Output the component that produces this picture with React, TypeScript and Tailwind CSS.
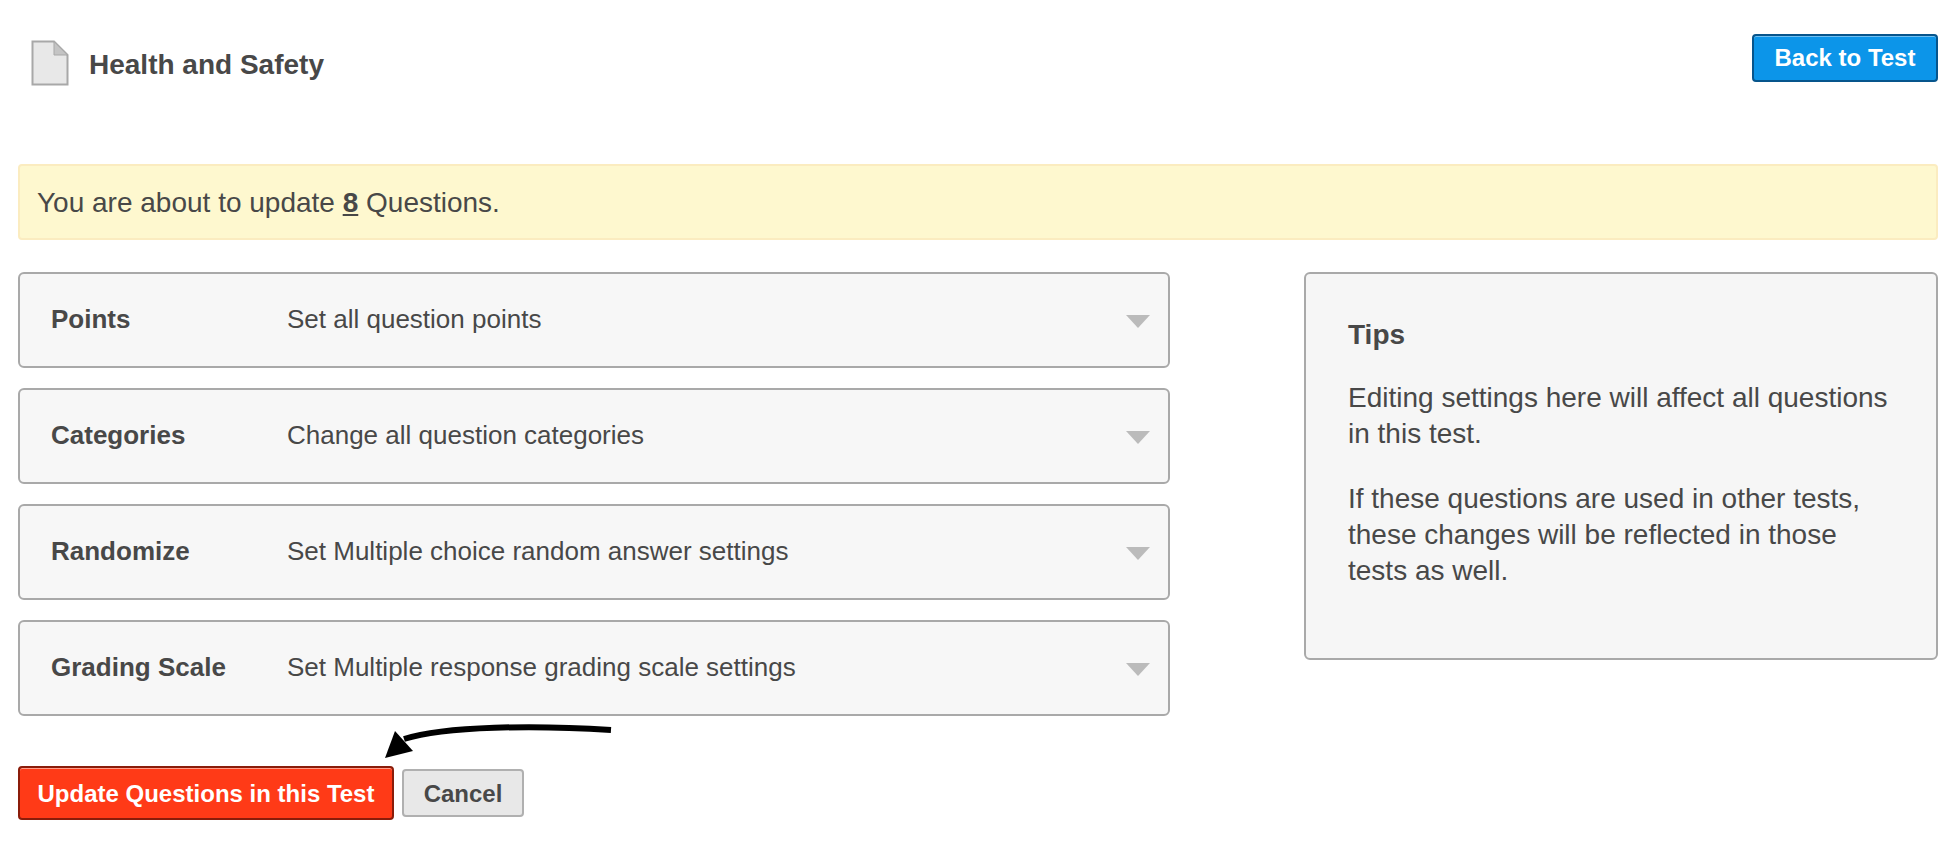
const rows = [
  { label: "Points", text: "Set all question points" },
  { label: "Categories", text: "Change all question categories" },
  { label: "Randomize", text: "Set Multiple choice random answer settings" },
  { label: "Grading Scale", text: "Set Multiple response grading scale settings" },
];

const DocIcon = () => (
  <svg width="38" height="46" viewBox="0 0 38 46" className="shrink-0">
    <path d="M1.5 1.5H23L36.5 15V44.5H1.5Z" fill="#e8e8e8" stroke="#a8a8a8" strokeWidth="2" />
    <path d="M23 1.5V15H36.5Z" fill="#c4c4c4" stroke="#a8a8a8" strokeWidth="1" />
  </svg>
);

const App = () => {
  return (
    <div className="h-[858px] w-[1950px] overflow-hidden bg-white pl-[18px] pr-[12px] font-['Liberation_Sans',Arial,sans-serif] text-[#484848]">
      <div className="flex h-[164px] items-start justify-between">
        <div className="ml-[13px] mt-[40px] flex items-center gap-[20px]">
          <DocIcon />
          <h1 className="mt-[4px] text-[28px] font-bold leading-[30px]">Health and Safety</h1>
        </div>
        <button className="mt-[34px] h-[48px] w-[186px] rounded-[4px] border-2 border-[#07558c] bg-[#0c95e9] text-[24px] font-bold text-white shadow-[inset_0_1px_0_#6fc0f2]">
          Back to Test
        </button>
      </div>

      <div className="flex h-[76px] items-center rounded-[4px] border-2 border-[#fbecc0] bg-[#fef8cf] pl-[17px] pt-[2px] text-[28px]">
        <p>
          You are about to update <span className="font-bold underline">8</span> Questions.
        </p>
      </div>

      <div className="mt-[32px] flex items-start justify-between">
        <div className="flex w-[1152px] flex-col gap-[20px]">
          {rows.map((row) => (
            <div
              key={row.label}
              className="flex h-[96px] items-center rounded-[6px] border-2 border-[#a9a9a9] bg-[#f7f7f7] pb-[2px] pl-[31px] pr-[18px] text-[26px]"
            >
              <span className="w-[236px] font-bold">{row.label}</span>
              <span className="flex-1">{row.text}</span>
              <svg width="24" height="13" viewBox="0 0 24 13" className="mt-[5px]">
                <path d="M0 0H24L12 13Z" fill="#bbbbbb" />
              </svg>
            </div>
          ))}
        </div>

        <div className="h-[388px] w-[634px] rounded-[6px] border-2 border-[#a9a9a9] bg-[#f6f6f6] pl-[42px] pr-[40px] pt-[43px] text-[28px] leading-[36px]">
          <h2 className="font-bold leading-[36px]">Tips</h2>
          <p className="mt-[27px]">Editing settings here will affect all questions in this test.</p>
          <p className="mt-[29px]">
            If these questions are used in other tests, these changes will be reflected in those tests as well.
          </p>
        </div>
      </div>

      <div className="relative mt-[50px] flex items-center gap-[8px]">
        <svg
          width="230"
          height="40"
          viewBox="0 0 230 40"
          className="absolute left-[367px] top-[-42px]"
        >
          <path d="M226 6C150 1 60 2 19 15" fill="none" stroke="#000000" strokeWidth="6" />
          <path d="M0 34L10 7L28 27Z" fill="#000000" />
        </svg>
        <button className="h-[54px] w-[376px] whitespace-nowrap rounded-[4px] border-2 border-[#8a1c0a] bg-[#ff3a17] pt-[2px] text-[24px] font-bold text-white shadow-[inset_0_1px_0_#ff9d8a]">
          Update Questions in this Test
        </button>
        <button className="h-[48px] w-[122px] rounded-[4px] border-2 border-[#b0b0b0] bg-[#e8e8e8] pt-[2px] text-[24px] font-bold">
          Cancel
        </button>
      </div>
    </div>
  );
};

export default App;
